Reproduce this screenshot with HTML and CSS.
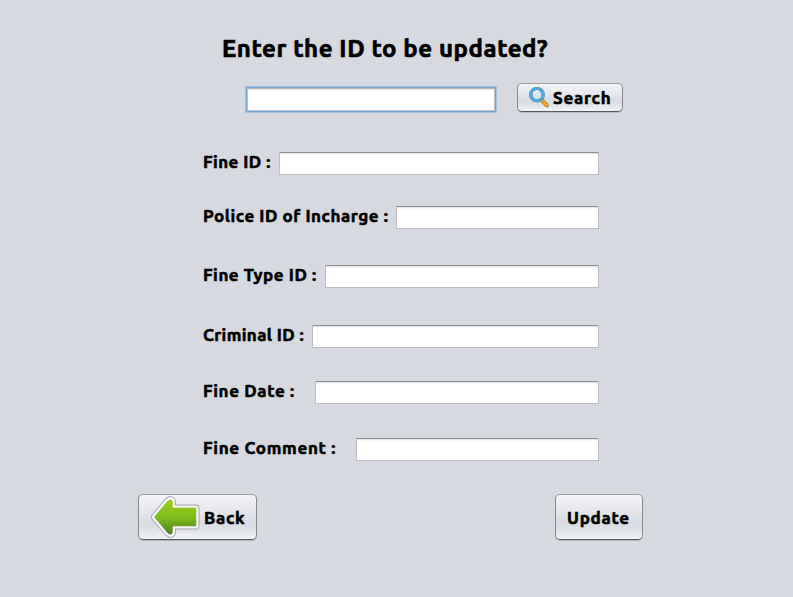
FILE: index.html
```
<!DOCTYPE html>
<html lang="en">
<head>
<meta charset="utf-8">
<title>Update fine</title>
<link rel="stylesheet" href="styles.css">
</head>
<body>
<main class="window">
  <h1 class="title"><span>Enter the ID to be updated?</span></h1>
  <form class="search-row">
    <input class="field field-focused" type="text" aria-label="ID">
    <button class="button button-search" type="button">
      <svg class="icon-search" viewBox="0 0 22 22" width="22" height="22" aria-hidden="true">
        <path d="M13.5 13 L19 18.5" stroke="#b9803c" stroke-width="4" stroke-linecap="round"/>
        <path d="M14 13.4 L19 18.4" stroke="#f4a62a" stroke-width="2.6" stroke-linecap="round"/>
        <circle cx="9" cy="7.7" r="6.2" fill="#dce2e9" stroke="#6b8796" stroke-width="3.4"/>
        <circle cx="9" cy="7.7" r="6.2" fill="none" stroke="#48aee0" stroke-width="2.7"/>
        <path d="M5.5 7.5 a3.6 3.6 0 0 1 5 -3.2" fill="none" stroke="#f8fafc" stroke-width="1.3"/>
      </svg>
      <span>Search</span>
    </button>
  </form>
  <form class="details">
    <label class="row"><span class="label l-fine">Fine ID :</span><input class="field" type="text"></label>
    <label class="row r-police"><span class="label l-police">Police ID of Incharge :</span><input class="field" type="text"></label>
    <label class="row r-type"><span class="label l-type">Fine Type ID :</span><input class="field" type="text"></label>
    <label class="row r-criminal"><span class="label l-criminal">Criminal ID :</span><input class="field" type="text"></label>
    <label class="row r-date"><span class="label l-date">Fine Date :</span><input class="field" type="text"></label>
    <label class="row r-comment"><span class="label l-comment">Fine Comment :</span><input class="field" type="text"></label>
  </form>
  <div class="actions">
    <button class="button button-back" type="button">
      <svg class="icon-back" viewBox="0 0 50 44" width="50" height="44" aria-hidden="true">
        <defs><linearGradient id="green" x1="0" y1="0" x2="0" y2="1"><stop offset="0" stop-color="#99cb18"/><stop offset=".5" stop-color="#80bd1d"/><stop offset="1" stop-color="#4d8420"/></linearGradient></defs>
        <g stroke-linejoin="round">
          <path d="M5 22 L18 6.5 Q21.5 3.5 22 7 V13.5 H45.5 V30.5 H22 V37 Q21.5 40.5 18 37.5 Z" fill="#999" stroke="#a2a3a6" stroke-width="8"/>
          <path d="M5 22 L18 6.5 Q21.5 3.5 22 7 V13.5 H45.5 V30.5 H22 V37 Q21.5 40.5 18 37.5 Z" fill="#fff" stroke="#f5f5f6" stroke-width="6.2"/>
          <path d="M5 22 L18 6.5 Q21.5 3.5 22 7 V13.5 H45.5 V30.5 H22 V37 Q21.5 40.5 18 37.5 Z" fill="url(#green)" stroke="url(#green)" stroke-width="1.4"/>
        </g>
      </svg>
      <span>Back</span>
    </button>
    <button class="button button-update" type="button"><span>Update</span></button>
  </div>
</main>
</body>
</html>
```
FILE: styles.css
```
* { box-sizing: border-box; }
body {
  margin: 0;
  background: #d6d9df;
  color: #000;
  font-family: Ubuntu, "Noto Sans", sans-serif;
}
.window { width: 793px; height: 597px; overflow: hidden; }
.title {
  margin: 33px 0 0 222px;
  height: 32px;
  font-size: 24px;
  line-height: 32px;
  font-weight: 700;
  letter-spacing: .58px;
  white-space: nowrap;
  -webkit-text-stroke: .7px #000;
}
.search-row { display: flex; margin: 18px 0 0 245px; gap: 20px; }
.field {
  display: block;
  flex: 1;
  min-width: 0;
  height: 23px;
  padding: 0 6px;
  border: 1px solid #bcbdc0;
  border-top-color: #8d8e91;
  border-radius: 0;
  background: #fff;
  box-shadow: inset 0 1px #e4e5e6, inset 0 2px #f8f8f8;
  outline: 0;
}
.field-focused {
  flex: none;
  width: 252px;
  height: 27px;
  margin-top: 3px;
  outline: 1px solid #a4c2df;
  outline-offset: -1px;
  box-shadow: inset 0 0 0 1px #73a4d1, inset 0 2px #b4b5b7, inset 0 3px #e0e1e2, inset 0 0 0 2px #c0c1c4;
}
.button {
  display: flex;
  align-items: center;
  padding: 0;
  border: 1px solid #85888d;
  border-top-color: #999ba0;
  border-bottom-color: #55585d;
  border-radius: 5px;
  background: linear-gradient(#f4f5f7, #e6e8ec 35%, #d9dce2 60%, #dbdee4 72%, #f1f3f7);
  color: #000;
  font: 700 17px Ubuntu, "Noto Sans", sans-serif;
  letter-spacing: .75px;
  white-space: nowrap;
  -webkit-text-stroke: .6px #000;
  box-shadow: 0 1px #b4b7bd;
}
.button-search { width: 106px; height: 29px; padding-left: 10px; }
.icon-search { flex: none; margin-right: 3px; }
.details { width: 396px; margin: 39px 0 0 203px; }
.row { display: flex; height: 23px; }
.r-police { margin-top: 31px; }
.r-type { margin-top: 36px; }
.r-criminal { margin-top: 37px; }
.r-date { margin-top: 33px; }
.r-comment { margin-top: 34px; }
.label {
  flex: none;
  height: 23px;
  font-size: 17px;
  line-height: 20px;
  font-weight: 700;
  letter-spacing: .55px;
  white-space: nowrap;
  -webkit-text-stroke: .6px #000;
}
.l-fine { width: 76px; letter-spacing: .45px; }
.l-police { width: 193px; }
.l-type { width: 122px; }
.l-criminal { width: 109px; letter-spacing: .38px; }
.l-date { width: 112px; letter-spacing: .65px; }
.l-comment { width: 153px; letter-spacing: .68px; }
.actions {
  display: flex;
  justify-content: space-between;
  width: 505px;
  margin: 33px 0 0 138px;
}
.button-back { width: 119px; height: 46px; padding-left: 11px; }
.icon-back { flex: none; margin-right: 4px; }
.button-update { width: 88px; height: 46px; padding-left: 11px; }
```
